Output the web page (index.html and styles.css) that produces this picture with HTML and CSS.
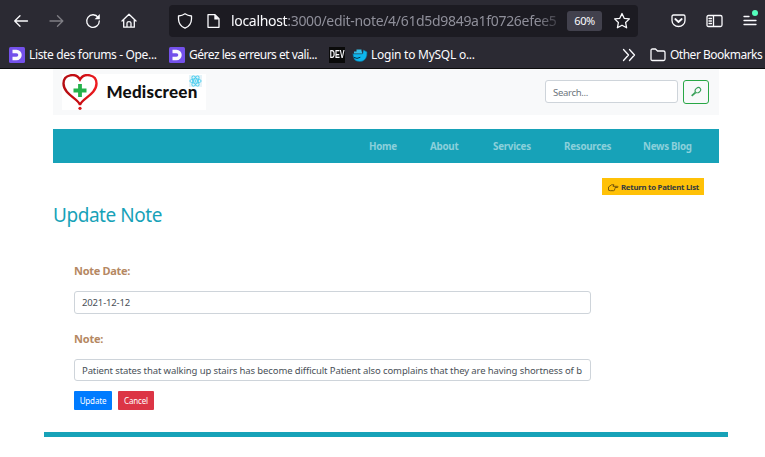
FILE: index.html
```html
<!DOCTYPE html>
<html lang="en">
<head>
<meta charset="utf-8">
<title>Mediscreen</title>
<link rel="stylesheet" href="styles.css">
</head>
<body>
<div class="browser">
  <div class="toolbar">
    <div class="nav-icons">
      <svg width="16" height="16" viewBox="0 0 16 16"><path d="M14.5 8H1.7M7 2.7L1.7 8L7 13.3"/></svg>
      <svg class="dim" width="16" height="16" viewBox="0 0 16 16"><path d="M1 8h12.7M8.5 2.7L13.8 8L8.5 13.3"/></svg>
      <svg width="16" height="16" viewBox="0 0 16 16"><path d="M13.2 4.5A6.3 6.3 0 1 0 14.3 8"/><path class="solid" d="M14.8 1v5.2H9.6z"/></svg>
      <svg width="16" height="16" viewBox="0 0 16 16"><path d="M1 8L8 1.2L15 8M2.7 6.8V14.2H13.3V6.8M6 14V10q0-1.4 2-1.4t2 1.4V14"/></svg>
    </div>
    <div class="urlbar">
      <svg width="16" height="16" viewBox="0 0 16 16"><path d="M8 .8C6 2.3 4 2.8 1.5 3V6C1.6 10.5 4 13.5 8 15.2C12 13.5 14.4 10.5 14.5 6V3C12 2.8 10 2.3 8 .8z"/></svg>
      <svg width="13" height="16" viewBox="0 0 13 16"><path d="M1 1.7H8L12 5.7V14.3H1z"/><path class="solid" d="M7.3 1.5V6.4H12z"/></svg>
      <div class="url"><b>localhost</b>:3000/edit-note/4/61d5d9849a1f0726efee5</div>
      <div class="zoom">60%</div>
      <svg class="star" width="18" height="18" viewBox="0 0 18 18"><path d="M9 1.5L11.2 6.3L16.4 6.9L12.6 10.5L13.6 15.8L9 13.2L4.4 15.8L5.4 10.5L1.6 6.9L6.8 6.3z"/></svg>
    </div>
    <div class="tools">
      <svg width="15" height="16" viewBox="0 0 15 16"><path d="M1 3.5Q1 2 2.5 2h10Q14 2 14 3.500V7.500A6.500 6 0 0 1 1 7.500z"/><path class="thick" d="M4.300 6L7.500 9L10.700 6"/></svg>
      <svg width="17" height="16" viewBox="0 0 17 16"><path d="M2.500 2.500h12q1.500 0 1.500 1.500v8q0 1.500-1.500 1.500h-12Q1 13.500 1 12V4q0-1.500 1.500-1.500zM7.500 2.500v11M3 5.500h2.500M3 8h2.500M3 10.500h2.500"/></svg>
      <svg width="15" height="18" viewBox="0 0 15 18"><path d="M1 7.500h5M1 11.500h12M1 15.500h12"/><circle class="alert" cx="12" cy="4" r="3"/></svg>
    </div>
  </div>
  <div class="bookmarks">
    <div class="mark"><svg width="16" height="16" viewBox="0 0 16 16"><rect class="oc" width="16" height="16" rx="1.500"/><path class="oc-d" d="M3.500 4.500H7.500A3.500 3.500 0 0 1 7.500 11.500H3.500"/></svg><span class="t1">Liste des forums - Ope...</span></div>
    <div class="mark"><svg width="16" height="16" viewBox="0 0 16 16"><rect class="oc" width="16" height="16" rx="1.500"/><path class="oc-d" d="M3.500 4.500H7.500A3.500 3.500 0 0 1 7.500 11.500H3.500"/></svg><span class="t2">Gérez les erreurs et vali...</span></div>
    <div class="dev"><span>DEV</span></div>
    <div class="mark third"><svg width="16" height="16" viewBox="0 0 16 16"><path class="whale" d="M1 7H9.500Q11.500 7 11 5L11.500 3L15 5L14.800 8.500Q13.500 14.500 7.500 14.500Q1 14.500 1 7z"/><path class="whale-top" d="M2 5.500h8M4.500 3.500h5"/><path class="whale-mouth" d="M2 10.500Q5 12.500 8 10.500"/></svg><span class="t3">Login to MySQL o...</span></div>
    <div class="rest">
      <svg width="14" height="14" viewBox="0 0 14 14"><path d="M1.500 1.500L6.500 7L1.500 12.500M7.500 1.500L12.500 7L7.500 12.500"/></svg>
      <svg width="16" height="14" viewBox="0 0 16 14"><path d="M1 2.500Q1 1 2.500 1H5.500L7.500 3H13.500Q15 3 15 4.500V11Q15 12.500 13.500 12.500H2.500Q1 12.500 1 11z"/></svg>
      <span class="t4">Other Bookmarks</span>
    </div>
  </div>
</div>
<div class="page">
  <header class="header">
    <div class="logo">
      <svg width="36" height="36" viewBox="0 0 36 36"><defs><linearGradient id="h"><stop offset="0" stop-color="#b50d12"/><stop offset=".5" stop-color="#c80c12"/><stop offset="1" stop-color="#ee1c20"/></linearGradient></defs><path class="heart" d="M18 31C17 25 1.500 20.500 1.500 9.500C1.500 0 14-1.500 18 5.500C22-1.500 34.500 0 34.500 9.500C34.500 20.500 19 25 18 31z"/><path class="cross" d="M18 10V23M11.500 16.500H24.500"/><circle class="drop" cx="18" cy="34.300" r="1.600"/></svg>
      <span class="brand">Mediscreen</span>
      <svg class="react" width="13" height="12" viewBox="0 0 13 12"><g><ellipse cx="6.500" cy="6" rx="5.700" ry="2.200"/><ellipse cx="6.500" cy="6" rx="5.700" ry="2.200" transform="rotate(60 6.500 6)"/><ellipse cx="6.500" cy="6" rx="5.700" ry="2.200" transform="rotate(120 6.500 6)"/><circle cx="6.500" cy="6" r=".7"/></g></svg>
    </div>
    <div class="search"><div class="field"><span>Search...</span></div>
      <div class="go"><svg width="12" height="12" viewBox="0 0 12 12"><ellipse cx="7.900" cy="4.200" rx="3" ry="2.300" transform="rotate(-40 7.900 4.200)"/><path class="handle" d="M5.500 6.500L1.700 9.800"/></svg></div></div>
  </header>
  <nav class="menu"><a class="m1">Home</a><a class="m2">About</a><a class="m3">Services</a><a class="m4">Resources</a><a class="m5">News Blog</a></nav>
  <div class="back"><div class="return"><svg width="11" height="9" viewBox="0 0 11 9"><path d="M.5 4L3.500 1.800H6L5 3.300H9.700Q10.500 3.800 9.700 4.500H7Q7.500 5.300 6.700 5.800Q7 7.600 5.500 7.700H2.500L.5 7.200z"/></svg><span>Return to Patient List</span></div></div>
  <h1><span>Update Note</span></h1>
  <form class="form">
    <label class="l1"><span>Note Date:</span></label>
    <div class="input"><span class="date">2021-12-12</span></div>
    <label class="l2"><span>Note:</span></label>
    <div class="input note"><span class="text">Patient states that walking up stairs has become difficult Patient also complains that they are having shortness of b</span></div>
    <div class="actions"><div class="btn update"><span>Update</span></div><div class="btn cancel"><span>Cancel</span></div></div>
  </form>
  <div class="rule"></div>
</div>
</body>
</html>
```
FILE: styles.css
```css
* { box-sizing: border-box; }
body { margin: 0; width: 765px; height: 457px; overflow: hidden; background: #fff; font-family: "Noto Sans", "Open Sans", sans-serif; white-space: nowrap; }
svg { flex: none; display: block; }
.browser { height: 69px; background: #2b2a33; color: #fbfbfe; border-bottom: 1px solid #0c0c0d; }
.browser svg { fill: none; stroke: #fbfbfe; stroke-width: 1.3; stroke-linecap: round; stroke-linejoin: round; }
.browser .solid { fill: #fbfbfe; stroke: none; }
.browser .dim { opacity: .4; }
.browser .thick { stroke-width: 1.8; }
.browser .alert { fill: #54ffbd; stroke: none; }
.toolbar { height: 41px; display: flex; align-items: center; }
.nav-icons { display: flex; gap: 20px; padding-left: 13px; width: 169px; }
.urlbar { width: 469px; height: 32px; border-radius: 4px; background: #1c1b22; display: flex; align-items: center; padding-left: 8px; }
.urlbar svg:nth-child(2) { margin-left: 14px; }
.url { width: 329px; margin-left: 11px; overflow: hidden; font-size: 14px; letter-spacing: -.32px; color: #8f8f9a; -webkit-mask-image: linear-gradient(90deg, #000 305px, transparent 335px); mask-image: linear-gradient(90deg, #000 305px, transparent 335px); }
.url b { font-weight: 400; color: #fbfbfe; }
.zoom { width: 35px; height: 20px; margin-left: 7px; border-radius: 3px; background: #42414d; font-size: 11px; letter-spacing: -.4px; line-height: 20px; text-align: center; }
.star { margin-left: 11px; }
.tools { display: flex; align-items: center; gap: 20px; padding-left: 33px; }
.tools svg:last-child { margin-top: -5px; }
.bookmarks { height: 27px; display: flex; align-items: center; padding-left: 9px; font-size: 12px; letter-spacing: -.35px; }
.mark { display: flex; align-items: center; gap: 4px; width: 160px; }
.t2 { letter-spacing: -.49px; }
.browser .oc { fill: #7451eb; stroke: none; }
.browser .oc-d { stroke-width: 3.4; stroke-linecap: butt; }
.dev { width: 16px; height: 16px; background: #0a0a0a; font: 700 9px/16px "Liberation Sans", sans-serif; letter-spacing: 0; display: flex; justify-content: center; }
.dev span { transform: scale(.8, 1.15); }
.third { width: 277px; padding-left: 7px; gap: 3px; letter-spacing: -.25px; }
.browser .whale { fill: #0db7ed; stroke: #0a6f9b; stroke-width: .6; }
.browser .whale-top { stroke: #35bfe8; stroke-width: 2; stroke-linecap: butt; }
.browser .whale-mouth { stroke: #073042; stroke-width: 1; }
.rest { display: flex; align-items: center; letter-spacing: -.5px; }
.rest svg:nth-child(2) { margin: 0 4px 0 14px; }
.page { padding: 0 46px 0 53px; }
.header { height: 46px; background: #f8f9fa; display: flex; justify-content: space-between; padding: 5px 10px 0 9px; }
.logo { width: 144px; height: 36px; background: #fff; display: flex; align-items: center; position: relative; }
.heart { fill: none; stroke: url(#h); stroke-width: 2.4; }
.cross { stroke: #25b24b; stroke-width: 3.8; fill: none; }
.drop { fill: #dc181c; }
.brand { margin-left: 8.500px; font: 900 17px/36px Lato, sans-serif; letter-spacing: .2px; color: #111; }
.react { position: absolute; left: 127px; top: 1px; background: #e5f3f8; }
.react g { fill: none; stroke: #45cdef; stroke-width: .9; }
.search { display: flex; gap: 5px; padding-top: 6px; }
.field, .input { border: 1px solid #ced4da; border-radius: 3px; background: #fff; color: #495057; overflow: hidden; }
.field { width: 133px; height: 23px; padding-left: 7px; font-size: 9.5px; letter-spacing: -.3px; line-height: 23px; color: #6c757d; }
.go { width: 26px; height: 24px; border: 1px solid #28a745; border-radius: 3px; display: flex; align-items: center; justify-content: center; }
.go svg { fill: none; stroke: #38a058; stroke-width: 1.1; }
.go .handle { stroke-width: 1.7; }
.menu { height: 34px; margin-top: 14px; background: #17a2b8; padding-left: 316px; display: flex; font-size: 9.8px; letter-spacing: -.27px; font-weight: 700; line-height: 35px; color: #8bd0db; }
.m1 { width: 61px; } .m2 { width: 63px; } .m3 { width: 71px; } .m4 { width: 79px; }
.back { display: flex; justify-content: flex-end; padding: 15px 15px 0 0; }
.return { width: 102px; height: 17px; background: #ffc107; display: flex; align-items: center; padding-left: 6px; gap: 2px; font-size: 7.8px; letter-spacing: -.25px; line-height: 18px; font-weight: 700; color: #343a40; }
.return svg { margin-top: 2px; fill: none; stroke: #6b4d0c; stroke-width: .9; }
h1 { margin: 5px 0 0; height: 30px; font-size: 19px; letter-spacing: -.45px; line-height: 30px; font-weight: 400; color: #17a2b8; }
.form { margin: 0; padding: 33px 0 0 21px; }
label { display: block; height: 28px; font-size: 11px; letter-spacing: -.3px; line-height: 16px; font-weight: 700; color: #b58863; }
.input { width: 517px; height: 23px; padding: 0 7px; font-size: 9.5px; line-height: 22px; }
.input span { display: block; }
.date { letter-spacing: -.15px; }
.text { letter-spacing: -.107px; }
.l2 { margin-top: 17px; letter-spacing: -.2px; }
.input.note { height: 22px; line-height: 21px; }
.actions { display: flex; gap: 6px; margin-top: 10px; }
.btn { height: 19px; border-radius: 1px; color: #fff; font-size: 8px; letter-spacing: -.15px; line-height: 20px; text-align: center; }
.update { width: 38px; background: #007bff; }
.cancel { width: 36px; background: #dc3545; }
.rule { height: 5px; margin: 22px -9px 0; background: #17a2b8; }
```
